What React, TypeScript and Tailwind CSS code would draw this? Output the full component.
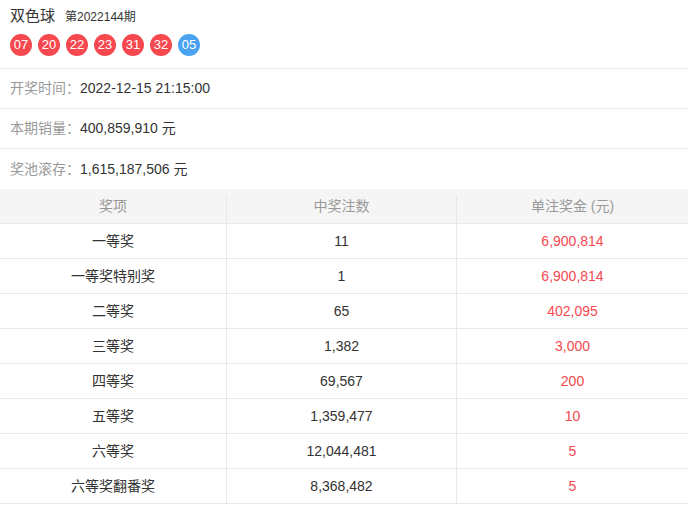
export default function App() {
  const reds = ["07", "20", "22", "23", "31", "32"];
  const rows = [
    ["一等奖", "11", "6,900,814"],
    ["一等奖特别奖", "1", "6,900,814"],
    ["二等奖", "65", "402,095"],
    ["三等奖", "1,382", "3,000"],
    ["四等奖", "69,567", "200"],
    ["五等奖", "1,359,477", "10"],
    ["六等奖", "12,044,481", "5"],
    ["六等奖翻番奖", "8,368,482", "5"],
  ];
  return (
    <div className="w-[688px] bg-white text-[#333] text-[14px]" style={{ fontFamily: '"Liberation Sans", "Noto Sans CJK SC", sans-serif' }}>
      <div className="h-[69px] border-b border-[#e8e8e8] px-[10px] pt-[5px]">
        <div className="flex items-baseline gap-[10px]">
          <span className="text-[15px]">双色球</span>
          <span className="text-[12px]">第2022144期</span>
        </div>
        <div className="flex gap-[6px] mt-[6px]">
          {reds.map((n) => (
            <div key={n} className="w-[22px] h-[22px] rounded-full bg-[#f5484f] text-white text-[13px] flex items-center justify-center">{n}</div>
          ))}
          <div className="w-[22px] h-[22px] rounded-full bg-[#4aa3f0] text-white text-[13px] flex items-center justify-center">05</div>
        </div>
      </div>
      {[["开奖时间：", "2022-12-15 21:15:00"], ["本期销量：", "400,859,910 元"], ["奖池滚存：", "1,615,187,506 元"]].map(([a, b], i) => (
        <div key={a} className={`h-[40px] flex items-center px-[10px] ${i < 2 ? "border-b border-[#e8e8e8]" : ""}`}>
          <span className="text-[#999]">{a}</span>
          <span>{b}</span>
        </div>
      ))}
      <div className="grid grid-cols-[227px_230px_231px] bg-[#f5f5f5] h-[35px] text-[#999] border-b border-[#e8e8e8]">
        <div className="flex items-center justify-center border-r border-[#e8e8e8] mt-[6px] pb-[6px]">奖项</div>
        <div className="flex items-center justify-center border-r border-[#e8e8e8] mt-[6px] pb-[6px]">中奖注数</div>
        <div className="flex items-center justify-center mt-[6px] pb-[6px]">单注奖金 (元)</div>
      </div>
      {rows.map((r) => (
        <div key={r[0]} className="grid grid-cols-[227px_230px_231px] h-[35px] border-b border-[#e8e8e8]">
          <div className="flex items-center justify-center border-r border-[#e8e8e8]">{r[0]}</div>
          <div className="flex items-center justify-center border-r border-[#e8e8e8]">{r[1]}</div>
          <div className="flex items-center justify-center text-[#f5484f]">{r[2]}</div>
        </div>
      ))}
    </div>
  );
}
